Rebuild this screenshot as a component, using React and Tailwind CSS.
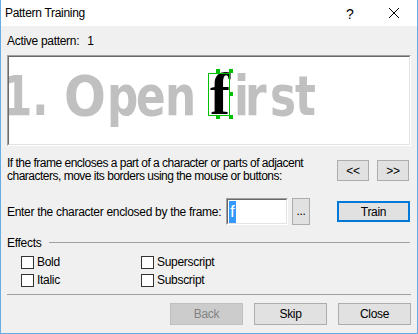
import React from "react";

const ui = { fontFamily: '"Liberation Sans", Arial, sans-serif' };

function Btn({ children, className = "" }) {
  return (
    <div
      className={`flex items-center justify-center bg-[#e1e1e1] border border-[#adadad] text-[12px] text-black ${className}`}
    >
      {children}
    </div>
  );
}

function Check({ label }) {
  return (
    <div className="flex items-center h-[13px]">
      <div className="w-[13px] h-[13px] border border-[#333333] bg-white shrink-0" />
      <span className="ml-[3px] text-[12px] leading-[13px]">{label}</span>
    </div>
  );
}

const glyphs = [
  { c: "1", cls: "left-[-7px] scale-x-[0.78]" },
  { c: ".", cls: "left-[23px] scale-x-[0.78]" },
  { c: "O", cls: "left-[55px] scale-x-[0.88]" },
  { c: "p", cls: "left-[98px] scale-x-[0.78]" },
  { c: "e", cls: "left-[127px] scale-x-[0.78]" },
  { c: "n", cls: "left-[156px] scale-x-[0.78]" },
  { c: "i", cls: "left-[225px] scale-x-[0.78]" },
  { c: "r", cls: "left-[236px] scale-x-[0.78]" },
  { c: "s", cls: "left-[261px] scale-x-[0.78]" },
  { c: "t", cls: "left-[286px] scale-x-[0.78]" },
];

export default function App() {
  return (
    <div
      className="w-[418px] h-[334px] bg-[#f0f0f0] border-x border-b border-[#66ade6] flex flex-col text-black overflow-hidden tracking-[-0.3px]"
      style={ui}
    >
      {/* Title bar */}
      <div className="h-[26px] bg-white flex items-center shrink-0 relative">
        <span className="ml-[4px] text-[12px]">Pattern Training</span>
        <span className="absolute left-[345px] top-[4px] text-[14px]">?</span>
        <svg className="absolute left-[387px] top-[7px]" width="12" height="12" viewBox="0 0 12 12">
          <path d="M1 1 L11 11 M11 1 L1 11" stroke="#000" strokeWidth="1" />
        </svg>
      </div>

      <div className="flex flex-col px-[6px] text-[12px]">
        <div className="mt-[8px] h-[15px] leading-[15px] flex">
          <span>Active pattern:</span>
          <span className="ml-[8px]">1</span>
        </div>

        {/* image frame */}
        <div className="mt-[6px] w-[404px] h-[91px] border-t border-l border-[#a0a0a0] border-b border-r border-b-white border-r-white">
          <div className="w-full h-full border-t border-l border-[#696969] border-b border-r border-b-[#e3e3e3] border-r-[#e3e3e3] bg-white relative overflow-hidden tracking-normal">
            {glyphs.map((g, i) => (
              <span
                key={i}
                className={`absolute top-[11px] ${g.cls} text-[56px] leading-none font-bold text-[#c0c0c0] origin-left`}
                style={{ fontFamily: '"DejaVu Sans", sans-serif' }}
              >
                {g.c}
              </span>
            ))}
            <span
              className="absolute top-[7px] left-[201px] text-[60px] leading-none text-black font-bold"
              style={{ fontFamily: '"Liberation Serif", serif' }}
            >
              f
            </span>
            {/* green frame */}
            <div className="absolute left-[199px] top-[16px] w-[22px] h-[43px] border border-[#00c000]" />
            <div className="absolute left-[207px] top-[12px] w-[4px] h-[4px] bg-[#00c000]" />
            <div className="absolute left-[220px] top-[12px] w-[4px] h-[4px] bg-[#00c000]" />
            <div className="absolute left-[220px] top-[35px] w-[4px] h-[4px] bg-[#00c000]" />
            <div className="absolute left-[207px] top-[58px] w-[4px] h-[4px] bg-[#00c000]" />
            <div className="absolute left-[220px] top-[58px] w-[4px] h-[4px] bg-[#00c000]" />
          </div>
        </div>

        {/* instruction row */}
        <div className="mt-[11px] flex">
          <div className="w-[330px] leading-[13px] tracking-[-0.5px]">
            If the frame encloses a part of a character or parts of adjacent characters, move its borders using the mouse or buttons:
          </div>
          <div className="flex gap-[8px] mt-[3px]">
            <Btn className="w-[32px] h-[21px]">&lt;&lt;</Btn>
            <Btn className="w-[32px] h-[21px]">&gt;&gt;</Btn>
          </div>
        </div>

        {/* enter row */}
        <div className="mt-[15px] flex items-center h-[27px]">
          <span className="w-[219px] whitespace-nowrap">Enter the character enclosed by the frame:</span>
          <div className="w-[62px] h-[27px] border-t border-l border-[#a0a0a0] border-b border-r border-b-white border-r-white">
            <div className="w-full h-full border-t border-l border-[#696969] border-b border-r border-b-[#e3e3e3] border-r-[#e3e3e3] bg-white flex items-center pl-[1px]">
              <span className="bg-[#3399ff] text-white text-[17px] leading-[22px] px-[1px] tracking-normal">
                f
              </span>
            </div>
          </div>
          <Btn className="ml-[4px] w-[18px] h-[27px] items-end pb-[4px]">...</Btn>
          <div className="ml-[27px] w-[73px] h-[21px] flex items-center justify-center bg-[#e1e1e1] border-2 border-[#0078d7]">
            Train
          </div>
        </div>

        {/* Effects */}
        <div className="mt-[10px] h-[15px] flex items-center">
          <span>Effects</span>
          <div className="ml-[8px] flex-1 h-px bg-[#a0a0a0] mr-[1px]" />
        </div>

        <div className="mt-[6px] ml-[14px] grid grid-cols-[120px_120px] gap-y-[5px]">
          <Check label="Bold" />
          <Check label="Superscript" />
          <Check label="Italic" />
          <Check label="Subscript" />
        </div>

        <div className="mt-[7px] w-[404px] h-px bg-[#a0a0a0]" />

        <div className="mt-[8px] w-[404px] flex justify-end gap-[11px]">
          <div className="w-[73px] h-[22px] flex items-center justify-center bg-[#cccccc] border border-[#bfbfbf] text-[#838383]">
            Back
          </div>
          <Btn className="w-[73px] h-[22px]">Skip</Btn>
          <Btn className="w-[73px] h-[22px]">Close</Btn>
        </div>
      </div>
    </div>
  );
}
